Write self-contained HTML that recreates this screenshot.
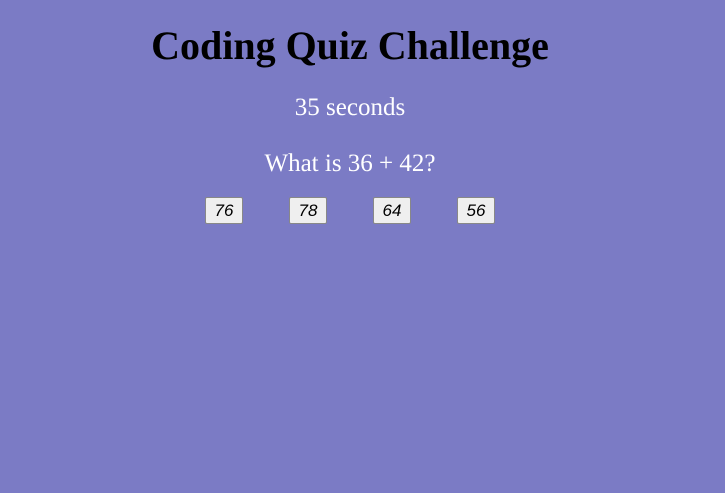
<!DOCTYPE html>
<html><head><style>
body{margin:0;width:725px;height:493px;background:#7b7bc5;font-family:"Liberation Serif",serif;position:relative;overflow:hidden}
.c{position:absolute;left:0;width:700px;text-align:center}
h1{margin:0;font-size:40px;font-weight:bold;color:#000}
.w{color:#fff;font-size:25px}
.b{position:absolute;top:197px;width:38px;height:27px;box-sizing:border-box;background:#efefef;border:1px solid #888;border-radius:2px;font:italic 17px "Liberation Sans",sans-serif;text-align:center;line-height:25px;color:#000}
</style></head><body>
<div class="c" style="top:22px"><h1>Coding Quiz Challenge</h1></div>
<div class="c w" style="top:94px">35 seconds</div>
<div class="c w" style="top:150px">What is 36 + 42?</div>
<div class="b" style="left:205px">76</div>
<div class="b" style="left:289px">78</div>
<div class="b" style="left:373px">64</div>
<div class="b" style="left:457px">56</div>
</body></html>
